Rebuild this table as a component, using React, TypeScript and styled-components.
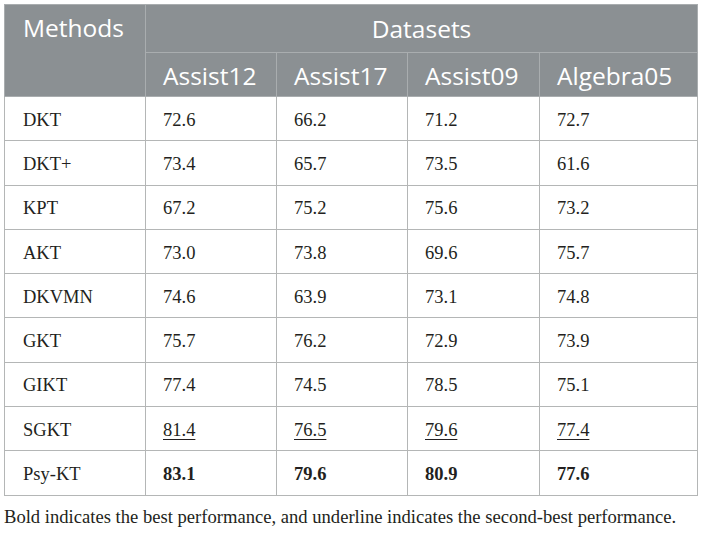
import React from "react";
import styled, { createGlobalStyle } from "styled-components";

const Global = createGlobalStyle`
  html, body { margin: 0; padding: 0; background: #ffffff; }
  body { width: 702px; height: 533px; overflow: hidden; }
`;

const Page = styled.div`
  padding: 4px 0 0 4px;
  width: 702px;
  box-sizing: border-box;
`;

const Table = styled.table`
  border-collapse: collapse;
  table-layout: fixed;
  width: 693px;
`;

const HeadCell = styled.th<{ $center?: boolean; $h?: number }>`
  background: #8b9093;
  color: #ffffff;
  font-family: "Open Sans", "Noto Sans", sans-serif;
  font-weight: 400;
  font-size: 24.5px;
  text-align: ${(p) => (p.$center ? "center" : "left")};
  vertical-align: ${(p) => (p.$center ? "middle" : "top")};
  border: 1px solid #a9adaf;
  height: ${(p) => p.$h ?? 44}px;
  padding: ${(p) => (p.$center ? "1px 0 0 0" : "7px 0 0 18px")};
  box-sizing: border-box;
  line-height: 32px;
`;

const SubHeadCell = styled(HeadCell)`
  vertical-align: middle;
  padding: 2px 0 0 17px;
`;

const Cell = styled.td<{ $first?: boolean; $bold?: boolean; $under?: boolean }>`
  font-family: "Liberation Serif", "Times New Roman", serif;
  font-size: 18.5px;
  color: #231f20;
  font-weight: ${(p) => (p.$bold ? 700 : 400)};
  text-decoration: ${(p) => (p.$under ? "underline" : "none")};
  text-underline-offset: 3px;
  text-decoration-thickness: 1px;
  border: 1px solid #b4b6b6;
  height: 44.3px;
  padding: 3px 0 0 ${(p) => (p.$first ? 18 : 17)}px;
  box-sizing: border-box;
  vertical-align: middle;
`;

const Caption = styled.p`
  margin: 10px 0 0 0;
  font-family: "Liberation Serif", "Times New Roman", serif;
  font-size: 18.6px;
  color: #231f20;
`;

type Style = "n" | "b" | "u";
const rows: { name: string; vals: string[]; s: Style }[] = [
  { name: "DKT", vals: ["72.6", "66.2", "71.2", "72.7"], s: "n" },
  { name: "DKT+", vals: ["73.4", "65.7", "73.5", "61.6"], s: "n" },
  { name: "KPT", vals: ["67.2", "75.2", "75.6", "73.2"], s: "n" },
  { name: "AKT", vals: ["73.0", "73.8", "69.6", "75.7"], s: "n" },
  { name: "DKVMN", vals: ["74.6", "63.9", "73.1", "74.8"], s: "n" },
  { name: "GKT", vals: ["75.7", "76.2", "72.9", "73.9"], s: "n" },
  { name: "GIKT", vals: ["77.4", "74.5", "78.5", "75.1"], s: "n" },
  { name: "SGKT", vals: ["81.4", "76.5", "79.6", "77.4"], s: "u" },
  { name: "Psy-KT", vals: ["83.1", "79.6", "80.9", "77.6"], s: "b" },
];

const widths = [141, 131, 131, 132, 158];

export default function App() {
  return (
    <Page>
      <Global />
      <Table>
        <colgroup>
          {widths.map((w, i) => (
            <col key={i} style={{ width: w }} />
          ))}
        </colgroup>
        <thead>
          <tr>
            <HeadCell rowSpan={2} $h={48}>Methods</HeadCell>
            <HeadCell colSpan={4} $center $h={48}>
              Datasets
            </HeadCell>
          </tr>
          <tr>
            {["Assist12", "Assist17", "Assist09", "Algebra05"].map((d) => (
              <SubHeadCell key={d}>{d}</SubHeadCell>
            ))}
          </tr>
        </thead>
        <tbody>
          {rows.map((r) => (
            <tr key={r.name}>
              <Cell $first>{r.name}</Cell>
              {r.vals.map((v, i) => (
                <Cell key={i} $bold={r.s === "b"} $under={r.s === "u"}>
                  {v}
                </Cell>
              ))}
            </tr>
          ))}
        </tbody>
      </Table>
      <Caption>
        Bold indicates the best performance, and underline indicates the second-best performance.
      </Caption>
    </Page>
  );
}
